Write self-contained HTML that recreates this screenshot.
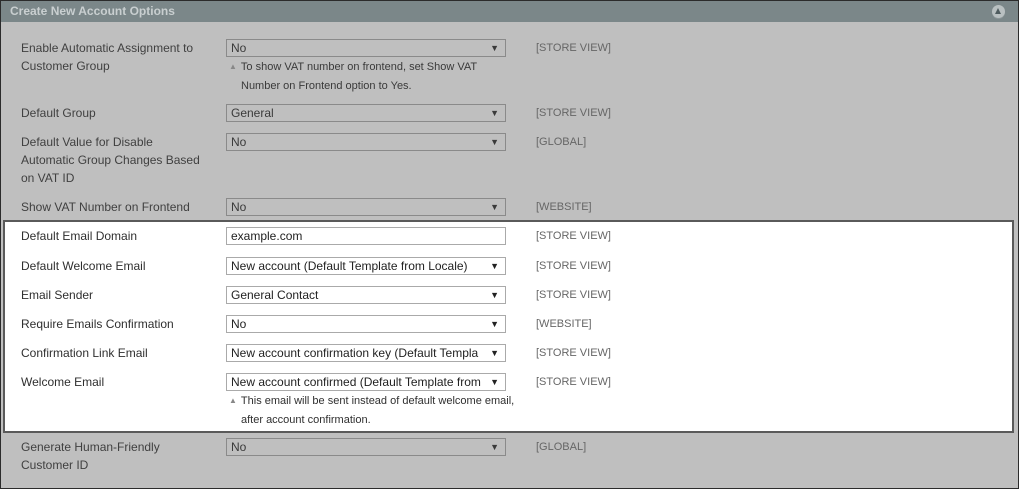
<!DOCTYPE html><html><head><style>
body{margin:0;width:1019px;height:489px;overflow:hidden;font-family:"Liberation Sans",Arial,sans-serif;}
#w{position:absolute;left:0;top:0;width:1017px;height:487px;border:1px solid #2b2b2b;background:#bfbfbf;overflow:hidden}
#h{position:absolute;left:0;top:0;width:1017px;height:21px;background:#7b8789;color:#c9cfd0;font-weight:bold;font-size:12px;line-height:21px;text-indent:9px}
#tg{position:absolute;left:991px;top:4px;width:13px;height:13px;border-radius:50%;background:#b9c0c1;box-shadow:0 1px 0 #8d9799}
#tg:after{content:"";position:absolute;left:3px;top:3px;border-left:3.5px solid transparent;border-right:3.5px solid transparent;border-bottom:6px solid #4f5c5f}
.l{position:absolute;left:20px;font-size:12px;color:#404040;line-height:18px;width:184px}
.s{position:absolute;left:225px;width:278px;height:16px;border:1px solid #8a8a8a;font-size:12px;line-height:16px;color:#3a3a3a;text-indent:4px;overflow:hidden;white-space:nowrap}
.s.d:after{content:"\25BC";position:absolute;right:6px;top:0;font-size:9px}
.c{position:absolute;left:535px;font-size:11px;color:#666;line-height:18px}
.n{position:absolute;left:228px;font-size:11px;color:#3a3a3a;line-height:19px}
.n:before{content:"\25B2";font-size:8px;color:#888;margin-right:4px;vertical-align:1px}
#box{position:absolute;left:2px;top:219px;width:1007px;height:209px;border:2px solid #5a5a5a;background:#fff}
.wt .l{color:#2f2f2f}.wt .s{background:#fff;border-color:#aaa;color:#222}.wt .c{color:#666}.wt .n{color:#2f2f2f}
</style></head><body><div id="w">
<div id="h">Create New Account Options</div><div id="tg"></div>
<div class="l" style="top:38px">Enable Automatic Assignment to Customer Group</div>
<div class="s d" style="top:38px">No</div><div class="c" style="top:38px">[STORE VIEW]</div>
<div class="n" style="top:56px;width:280px">To show VAT number on frontend, set Show VAT<br><span style="padding-left:12px">Number on Frontend option to Yes.</span></div>
<div class="l" style="top:103px">Default Group</div><div class="s d" style="top:103px">General</div><div class="c" style="top:103px">[STORE VIEW]</div>
<div class="l" style="top:132px">Default Value for Disable Automatic Group Changes Based on VAT ID</div><div class="s d" style="top:132px">No</div><div class="c" style="top:132px">[GLOBAL]</div>
<div class="l" style="top:197px">Show VAT Number on Frontend</div><div class="s d" style="top:197px">No</div><div class="c" style="top:197px">[WEBSITE]</div>
<div id="box"></div>
<div class="wt">
<div class="l" style="top:226px">Default Email Domain</div><div class="s" style="top:226px">example.com</div><div class="c" style="top:226px">[STORE VIEW]</div>
<div class="l" style="top:256px">Default Welcome Email</div><div class="s d" style="top:256px">New account (Default Template from Locale)</div><div class="c" style="top:256px">[STORE VIEW]</div>
<div class="l" style="top:285px">Email Sender</div><div class="s d" style="top:285px">General Contact</div><div class="c" style="top:285px">[STORE VIEW]</div>
<div class="l" style="top:314px">Require Emails Confirmation</div><div class="s d" style="top:314px">No</div><div class="c" style="top:314px">[WEBSITE]</div>
<div class="l" style="top:343px">Confirmation Link Email</div><div class="s d" style="top:343px">New account confirmation key (Default Templa</div><div class="c" style="top:343px">[STORE VIEW]</div>
<div class="l" style="top:372px">Welcome Email</div><div class="s d" style="top:372px">New account confirmed (Default Template from</div><div class="c" style="top:372px">[STORE VIEW]</div>
<div class="n" style="top:390px;width:290px">This email will be sent instead of default welcome email,<br><span style="padding-left:12px">after account confirmation.</span></div>
</div>
<div class="l" style="top:437px">Generate Human-Friendly Customer ID</div><div class="s d" style="top:437px">No</div><div class="c" style="top:437px">[GLOBAL]</div>
</div></body></html>
